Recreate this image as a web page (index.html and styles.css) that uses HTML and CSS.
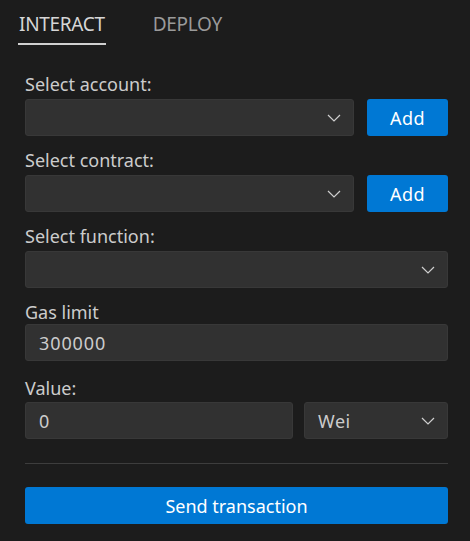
FILE: index.html
```html
<!DOCTYPE html>
<html>
<head>
<meta charset="utf-8">
<link rel="stylesheet" href="styles.css">
</head>
<body>
<div class="panel">
  <nav class="tabs">
    <div class="tab active">INTERACT</div>
    <div class="tab">DEPLOY</div>
  </nav>
  <form class="form">
    <div class="group">
      <label class="label">Select account:</label>
      <div class="row">
        <div class="select grow"><span class="value"></span><svg class="chev" viewBox="0 0 14 8"><path d="M1 1l6 6 6-6" fill="none" stroke="#cfcfcf" stroke-width="1.2"/></svg></div>
        <button type="button" class="btn add">Add</button>
      </div>
    </div>
    <div class="group">
      <label class="label">Select contract:</label>
      <div class="row">
        <div class="select grow"><span class="value"></span><svg class="chev" viewBox="0 0 14 8"><path d="M1 1l6 6 6-6" fill="none" stroke="#cfcfcf" stroke-width="1.2"/></svg></div>
        <button type="button" class="btn add">Add</button>
      </div>
    </div>
    <div class="group">
      <label class="label">Select function:</label>
      <div class="select"><span class="value"></span><svg class="chev" viewBox="0 0 14 8"><path d="M1 1l6 6 6-6" fill="none" stroke="#cfcfcf" stroke-width="1.2"/></svg></div>
    </div>
    <div class="group">
      <label class="label short">Gas limit</label>
      <div class="input">300000</div>
    </div>
    <div class="group">
      <label class="label tall">Value:</label>
      <div class="row value-row">
        <div class="input grow">0</div>
        <div class="select unit"><span class="value">Wei</span><svg class="chev" viewBox="0 0 14 8"><path d="M1 1l6 6 6-6" fill="none" stroke="#cfcfcf" stroke-width="1.2"/></svg></div>
      </div>
    </div>
    <hr class="divider">
    <button type="button" class="btn send">Send transaction</button>
  </form>
</div>
</body>
</html>
```
FILE: styles.css
```css
html, body {
  margin: 0;
  padding: 0;
  background: #1c1c1c;
}
body {
  font-family: "Noto Sans", "Open Sans", sans-serif;
  color: #cccccc;
  font-size: 18px;
}
.panel {
  width: 470px;
  height: 541px;
  box-sizing: border-box;
  padding: 0 22px 0 25px;
}
.tabs {
  display: flex;
  gap: 46px;
  margin-left: -7px;
  height: 45px;
}
.tab {
  font-size: 19px;
  color: #9a9a9a;
  padding: 12px 1px 0;
  height: 36px;
  line-height: 24px;
  box-sizing: border-box;
  letter-spacing: -0.3px;
}
.tab.active {
  color: #d6d6d6;
  height: 45px;
  border-bottom: 2px solid #d0d0d0;
}
.form {
  display: flex;
  flex-direction: column;
  gap: 12px;
  padding-top: 27px;
}
.group {
  display: flex;
  flex-direction: column;
}
.label {
  line-height: 24px;
  height: 27px;
  font-size: 18px;
  color: #cccccc;
}
.label.short {
  height: 24px;
}
.label.tall {
  height: 29px;
  line-height: 30px;
}
.row {
  display: flex;
  gap: 13px;
}
.value-row {
  gap: 11px;
}
.grow {
  flex: 1;
}
.select, .input {
  height: 37px;
  box-sizing: border-box;
  background: #313131;
  border: 1px solid #383838;
  border-radius: 3px;
  display: flex;
  align-items: center;
  padding: 0 12px 0 13px;
  font-size: 18px;
  color: #cccccc;
}
.input {
  letter-spacing: 0.9px;
}
.select .value {
  flex: 1;
}
.chev {
  width: 14px;
  height: 8px;
}
.unit {
  width: 144px;
  letter-spacing: 0.5px;
}
.btn {
  height: 37px;
  border: none;
  border-radius: 3px;
  background: #0078d4;
  color: #ffffff;
  font-family: inherit;
  font-size: 18px;
  padding: 0;
}
.add {
  width: 81px;
  letter-spacing: 0.5px;
}
.divider {
  border: none;
  border-top: 1px solid #3d3d3d;
  margin: 12px 0 11px;
  height: 0;
}
.send {
  width: 100%;
}
```
